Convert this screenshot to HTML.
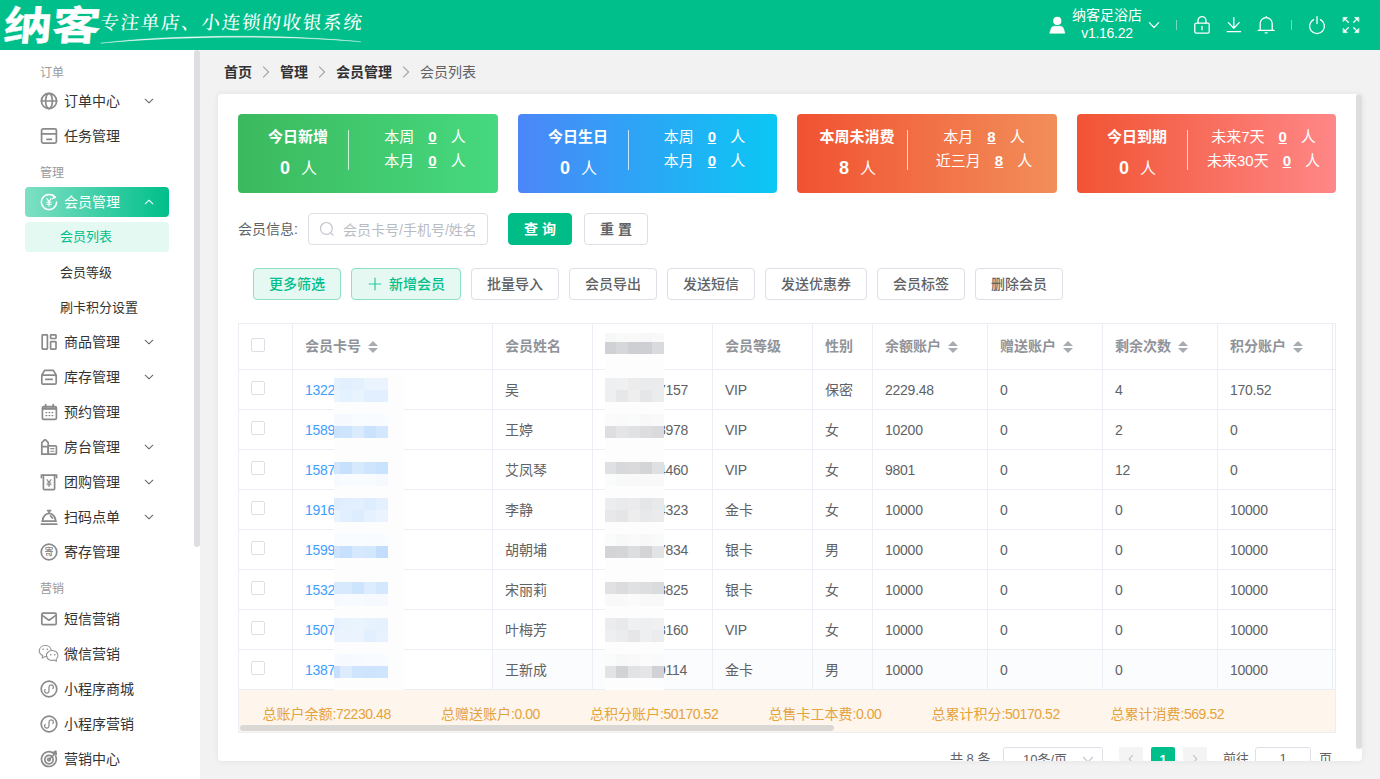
<!DOCTYPE html>
<html lang="zh-CN">
<head>
<meta charset="utf-8">
<title>会员列表</title>
<style>
*{box-sizing:border-box;margin:0;padding:0}
html,body{width:1380px;height:779px;overflow:hidden}
body{font-family:"Liberation Sans","Noto Sans CJK SC",sans-serif;font-size:14px;color:#333;background:#f2f2f2;position:relative}
svg{display:block}
/* header */
#hd{position:absolute;left:0;top:0;width:1380px;height:50px;background:#00bf8a;color:#fff}
#logo{position:absolute;left:4px;top:-2px;font-size:40px;line-height:56px;font-weight:700;white-space:nowrap;transform:scaleX(1.21) skewX(-4deg);transform-origin:0 50%;-webkit-text-stroke:.4px #fff}
#slogan{position:absolute;left:98.5px;top:11px;font-size:18.5px;line-height:24px;letter-spacing:1.75px;font-weight:500;font-family:"Liberation Serif","Noto Serif CJK SC",serif;white-space:nowrap;transform:skewX(-6deg);transform-origin:0 100%}
#swoosh{position:absolute;left:98px;top:33px;opacity:.92}
.hi{position:absolute}
#uname{position:absolute;left:1062px;top:7px;width:90px;text-align:center;font-size:14px;line-height:17px}
.vd{position:absolute;top:20px;width:1px;height:10px;background:rgba(255,255,255,.45)}
/* sidebar */
#sb{position:absolute;left:0;top:50px;width:200px;height:729px;background:#fff;overflow:hidden}
#sbtrack{display:none}
#sbthumb{position:absolute;left:194px;top:50px;width:5.6px;height:496.6px;background:#dddee1;border-radius:3px}
.lbl{position:absolute;left:40px;font-size:12px;line-height:20px;color:#999;height:20px}
.it{position:absolute;left:25px;width:144px;height:30px;line-height:30px;font-size:14px;color:#333;border-radius:4px}
.it .ic{position:absolute;left:15px;top:6px;width:18px;height:18px}
.it .tx{position:absolute;left:39px;top:0;white-space:nowrap}
.it .ar{position:absolute;left:119px;top:11px}
.it.on{background:linear-gradient(90deg,#7fdfc4,#00bf8a);color:#fff}
.sub{position:absolute;left:25px;width:144px;height:30px;line-height:30px;font-size:13px;color:#333;padding-left:35px;border-radius:4px}
.sub.on{background:#e5f9f3;color:#00bf8a}
/* main */
#bc{position:absolute;left:224px;top:62px;height:20px;line-height:20px;font-size:14px;font-weight:bold;color:#303133;white-space:nowrap}
#bc span{display:inline-block;vertical-align:top}
#bc .sp{width:28px;text-align:center;color:#999;font-weight:normal}
#bc .last{font-weight:normal;color:#606266}
#card{position:absolute;left:218px;top:94px;width:1144px;height:667px;background:#fff;border-radius:4px;box-shadow:0 0 6px rgba(0,0,0,.07);overflow:hidden}
#cthumb{position:absolute;right:0;top:0;width:6px;height:655px;background:#dddee0;border-radius:3px}

/* stats */
#stats{position:absolute;left:20px;top:20px;width:1098px;height:79px}
.st{position:absolute !important;top:0}
.c1{left:0}.c2{left:280px;width:259px !important}.c3{left:559px}.c4{left:839px;width:259px !important}
.st{flex:none;width:260px;height:79px;border-radius:4px;position:relative;color:#fff}
.c1{background:linear-gradient(90deg,#3cb95e,#46d97f)}
.c2{background:linear-gradient(90deg,#4c86f8,#0ac8f3)}
.c3{background:linear-gradient(90deg,#f15231,#f28e59)}
.c4{background:linear-gradient(90deg,#f15433,#ff8787)}
.sl{position:absolute;left:10px;top:0;width:100px;height:79px;text-align:center}
.sl .t{position:absolute;left:-10px;right:-10px;top:12px;line-height:22px;font-size:15px;font-weight:bold;white-space:nowrap}
.sl .n{position:absolute;left:0;right:0;top:42px;line-height:24px;font-size:16px;white-space:nowrap}
.sl .n b{font-size:18px;margin-right:11px;margin-left:1px}
.sd{position:absolute;left:110px;top:16px;width:1px;height:40px;background:rgba(255,255,255,.75)}
.sr{position:absolute;left:114px;right:0;top:11px;text-align:center;font-size:15px;line-height:24px;white-space:nowrap}
.sr u{margin:0 14px;font-weight:bold;text-underline-offset:1px}
/* search */
#srch{position:absolute;left:20px;top:119px;height:32px;width:700px}
#srch .lab{position:absolute;left:0;top:0;line-height:32px;color:#606266;font-size:14px}
.inp{position:absolute;left:70px;top:0;width:180px;height:32px;border:1px solid #dcdfe6;border-radius:4px;display:flex;align-items:center;color:#b9bcc3;font-size:14px;white-space:nowrap}
.inp svg{margin-left:10px;margin-right:8px;flex:none}
.btn{position:absolute;top:0;height:32px;line-height:30px;border:1px solid #dcdfe6;border-radius:4px;text-align:center;font-size:14px;color:#606266;background:#fff;font-weight:500;white-space:nowrap}
.btn.pri{background:#00bc87;border-color:#00bc87;color:#fff;font-weight:bold}
.btn.grn{background:#e5f8f2;border-color:#8fdfc6;color:#00bf8a}
.btn svg{display:inline-block;vertical-align:-2px;margin-right:7px;margin-left:1px;opacity:.8}
#brow{position:absolute;left:0;top:174px;height:32px;width:1100px}
/* table */
#tb{position:absolute;left:20px;top:229px;width:1098px;height:410px;border-left:1px solid #ebeef5;border-top:1px solid #ebeef5;border-right:1px solid #ebeef5;overflow:hidden;font-size:14px;color:#606266}
.tr{position:relative;display:flex;height:40px;width:1400px;border-bottom:1px solid #ebeef5}
.tr.th{height:46px;color:#909399;font-weight:bold}
.tr.th .c{bottom:4px}
.td .c.z{top:-2px}
.tr.last .td:nth-child(n+3){background:#fbfcfd}
.td{flex:none;height:100%;border-right:1px solid #ebeef5;position:relative}
.td:first-child{width:54px !important}
.td .c{position:absolute;left:12px;top:0;bottom:0;display:flex;align-items:center;white-space:nowrap}
.td .lk{color:#409eff}
.td .ph{left:65px}
.cb{position:absolute;left:12px;top:50%;margin-top:-9px;width:14px;height:14px;border:1px solid #dcdfe6;border-radius:2px;background:#fff}
.cr{display:inline-block;position:relative;width:10px;height:14px;margin-left:7px;top:2px}
.cr i{position:absolute;left:0;width:0;height:0;border:5px solid transparent}
.cr .up{border-bottom-color:#a8abb2;top:-4px}
.cr .dn{border-top-color:#a8abb2;top:8px}
.mz i{position:absolute;display:block}
#sum{position:absolute;left:0;top:366px;width:1098px;height:43px;background:#fef5ec;color:#e6a23c;font-size:14px;border-bottom:1px solid #ebeef5}
#sum span{position:absolute;top:13.6px;line-height:20px;white-space:nowrap}
#sum span em{font-style:normal;letter-spacing:-.45px}
.td .c.n{letter-spacing:-.25px}
#sum .hs{position:absolute;left:1px;top:35px;width:594px;height:6px;border-radius:3px;background:#d9d8d5}
/* pagination */
#pg{position:absolute;left:0;top:653px;height:28px;width:1144px;font-size:13px;color:#606266}
#pg .t{position:absolute;top:0;line-height:24px;white-space:nowrap}
#pg .sel{position:absolute;top:0;height:28px;border:1px solid #dcdfe6;border-radius:3px;display:flex;align-items:center;justify-content:space-between;white-space:nowrap}
#pg .sel span{margin-left:19px;position:relative;top:-2.5px}
#pg .sel svg{margin-right:8px;position:relative;top:-1px}
#pg .pb{position:absolute;top:0;width:24px;height:28px;padding-bottom:4px;border-radius:2px;background:#f4f4f5;display:flex;align-items:center;justify-content:center;font-weight:bold}
#pg .pb.cur{background:#00bf8a;color:#fff}
</style>
</head>
<body>
<div id="hd">
  <div id="logo">纳客</div>
  <div id="slogan">专注单店、小连锁的收银系统</div>
  <svg class="hi" style="left:1049px;top:16px" width="17" height="18" viewBox="0 0 17 18" fill="#fff"><circle cx="8.3" cy="4.9" r="4.1"/><path d="M0.7 17.2 L2.3 12.2 Q3 10.3 5.2 10.3 H11.4 Q13.6 10.3 14.3 12.2 L15.9 17.2 Z" stroke="#fff" stroke-width=".6" stroke-linejoin="round"/></svg>
<div id="uname">纳客足浴店<br><span style="position:relative;top:1px;letter-spacing:-.3px">v1.16.22</span></div>
<svg class="hi" style="left:1148px;top:21px" width="12" height="8" viewBox="0 0 12 8" fill="none" stroke="#fff" stroke-width="1.2" stroke-linecap="round" stroke-linejoin="round"><path d="M1.3 1.7 L6 6.5 L10.7 1.7"/></svg>
<div class="vd" style="left:1176px"></div>
<svg class="hi" style="left:1193px;top:15px" width="18" height="20" viewBox="0 0 18 20" fill="none" stroke="#fff" stroke-width="1.3" stroke-linecap="round" stroke-linejoin="round"><rect x="1.8" y="8.2" width="14.4" height="10" rx="1.4"/><path d="M5 8V5.6A4 4 0 0 1 13 5.6V8M9 11.4V14.8"/></svg>
<svg class="hi" style="left:1225px;top:15px" width="18" height="20" viewBox="0 0 18 20" fill="none" stroke="#fff" stroke-width="1.3" stroke-linecap="round" stroke-linejoin="round"><path d="M8.8 2.6V13.2M3.4 7.6 L8.8 13.2 L14.2 7.6M2.2 16.7H15.6"/></svg>
<svg class="hi" style="left:1256px;top:15px" width="20" height="20" viewBox="0 0 20 20" fill="none" stroke="#fff" stroke-width="1.3" stroke-linecap="round" stroke-linejoin="round"><path d="M2.2 15.3H18.2M4.2 15.2V8.6A6 6 0 0 1 16.2 8.6V15.2M10.2 2.4V1.6M9.2 17.8H11.2"/></svg>
<div class="vd" style="left:1291px"></div>
<svg class="hi" style="left:1307px;top:15px" width="20" height="20" viewBox="0 0 20 20" fill="none" stroke="#fff" stroke-width="1.3" stroke-linecap="round" stroke-linejoin="round"><path d="M6.6 4.6A7.4 7.4 0 1 0 13.4 4.6M10 1.6V8.6"/></svg>
<svg class="hi" style="left:1342px;top:16px" width="18" height="18" viewBox="0 0 18 18" fill="#fff" stroke="#fff" stroke-width="1.3" stroke-linecap="round" stroke-linejoin="round"><path d="M2.4 2.4 L6.3 6.3M15.6 2.4 L11.7 6.3M2.4 15.6 L6.3 11.7M15.6 15.6 L11.7 11.7"/><path stroke-width=".6" d="M1.4 1.4H5.4L1.4 5.4ZM16.6 1.4H12.6L16.6 5.4ZM1.4 16.6H5.4L1.4 12.6ZM16.6 16.6H12.6L16.6 12.6Z"/></svg>

<svg id="swoosh" width="266" height="14" viewBox="0 0 264 14" preserveAspectRatio="none"><path d="M2.5 10.2 C70 1.6 180 0.6 261 8.8 C180 1.8 75 3.2 2.5 10.2Z" fill="#fff" stroke="#fff" stroke-width=".35" stroke-linejoin="round"/></svg>
</div>
<div id="sb">
<div class="lbl" style="top:13px">订单</div>
<div class="it" style="top:36px"><svg class="ic" width="18" height="18" viewBox="0 0 18 18" fill="none" stroke="#8a8a8a" stroke-width="1.7" stroke-linecap="round" stroke-linejoin="round"><circle cx="9" cy="9" r="7.6"/><ellipse cx="9" cy="9" rx="3.4" ry="7.6"/><path d="M1.4 9H16.6"/></svg><span class="tx">订单中心</span><svg class="ar" width="10" height="8" viewBox="0 0 10 8" fill="none" stroke="#666" stroke-width="1.05" stroke-linecap="round" stroke-linejoin="round"><path d="M1.2 2.2 L5 5.8 L8.8 2.2"/></svg></div>
<div class="it" style="top:71px"><svg class="ic" width="18" height="18" viewBox="0 0 18 18" fill="none" stroke="#8a8a8a" stroke-width="1.7" stroke-linecap="round" stroke-linejoin="round"><rect x="1.6" y="1.8" width="14.8" height="14.4" rx="1.6"/><path d="M1.6 6.9H16.4M7 12.4H11.4"/></svg><span class="tx">任务管理</span></div>
<div class="lbl" style="top:113px">管理</div>
<div class="it on" style="top:137px"><svg class="ic" width="18" height="18" viewBox="0 0 18 18" fill="none" stroke="#fff" stroke-width="1.5" stroke-linecap="round" stroke-linejoin="round"><path d="M14.9 4.2A7.6 7.6 0 1 0 16.6 9"/><path d="M12.6 1.9 L15.3 4.3 L12.3 5.6" /><path d="M6.9 5.6 L9 8.6 L11.1 5.6M9 8.6V13M6.8 9.2H11.2M6.8 11.2H11.2" stroke-width="1.1"/></svg><span class="tx">会员管理</span><svg class="ar" width="10" height="8" viewBox="0 0 10 8" fill="none" stroke="#fff" stroke-width="1.05" stroke-linecap="round" stroke-linejoin="round"><path d="M1.2 5.8 L5 2.2 L8.8 5.8"/></svg></div>
<div class="sub on" style="top:172px">会员列表</div>
<div class="sub" style="top:208px">会员等级</div>
<div class="sub" style="top:243px">刷卡积分设置</div>
<div class="it" style="top:277px"><svg class="ic" width="18" height="18" viewBox="0 0 18 18" fill="none" stroke="#8a8a8a" stroke-width="1.7" stroke-linecap="round" stroke-linejoin="round"><rect x="2.2" y="1.9" width="5.2" height="14.2" rx=".6"/><rect x="10.6" y="1.9" width="5.4" height="3.6" rx=".6"/><rect x="10.6" y="8.6" width="5.4" height="7.5" rx=".6"/></svg><span class="tx">商品管理</span><svg class="ar" width="10" height="8" viewBox="0 0 10 8" fill="none" stroke="#666" stroke-width="1.05" stroke-linecap="round" stroke-linejoin="round"><path d="M1.2 2.2 L5 5.8 L8.8 2.2"/></svg></div>
<div class="it" style="top:312px"><svg class="ic" width="18" height="18" viewBox="0 0 18 18" fill="none" stroke="#8a8a8a" stroke-width="1.7" stroke-linecap="round" stroke-linejoin="round"><path d="M1.8 7.2 L4.6 2.4 H13.4 L16.2 7.2"/><rect x="1.8" y="7.2" width="14.4" height="9" rx="1.4"/><path d="M5.8 11.4H12.2"/></svg><span class="tx">库存管理</span><svg class="ar" width="10" height="8" viewBox="0 0 10 8" fill="none" stroke="#666" stroke-width="1.05" stroke-linecap="round" stroke-linejoin="round"><path d="M1.2 2.2 L5 5.8 L8.8 2.2"/></svg></div>
<div class="it" style="top:347px"><svg class="ic" width="18" height="18" viewBox="0 0 18 18" fill="none" stroke="#8a8a8a" stroke-width="1.7" stroke-linecap="round" stroke-linejoin="round"><rect x="2.4" y="3.6" width="14" height="12.8" rx="1.4"/><path d="M2.4 5.6H16.4" stroke-width="2.4" stroke-linecap="butt"/><path d="M5.6 1.6V4M13.2 1.6V4"/><path d="M6 9.6h.8M9 9.6h.8M12 9.6h.8M6 12.6h.8M9 12.6h.8M12 12.6h.8" stroke-width="1.4"/></svg><span class="tx">预约管理</span></div>
<div class="it" style="top:382px"><svg class="ic" width="18" height="18" viewBox="0 0 18 18" fill="none" stroke="#8a8a8a" stroke-width="1.7" stroke-linecap="round" stroke-linejoin="round"><path d="M1.8 16.2V4.6 L4.6 1.8 H5.6 L8.2 4.6 V16.2Z"/><path d="M1.8 8.6H8.2"/><rect x="8.2" y="7.8" width="8.2" height="8.4" rx="1"/><path d="M10.6 10.6H14M10.6 13.2H14" stroke-width="1.1"/></svg><span class="tx">房台管理</span><svg class="ar" width="10" height="8" viewBox="0 0 10 8" fill="none" stroke="#666" stroke-width="1.05" stroke-linecap="round" stroke-linejoin="round"><path d="M1.2 2.2 L5 5.8 L8.8 2.2"/></svg></div>
<div class="it" style="top:417px"><svg class="ic" width="18" height="18" viewBox="0 0 18 18" fill="none" stroke="#8a8a8a" stroke-width="1.7" stroke-linecap="round" stroke-linejoin="round"><path d="M1.4 4.6V2.2H16.6V4.6"/><path d="M3.4 2.2V15.4Q3.4 16.6 4.6 16.6H13.4Q14.6 16.6 14.6 15.4V2.2"/><path d="M7 6.6 L9 9.4 L11 6.6M9 9.4V13.4M7 10H11M7 11.8H11" stroke-width="1.1"/></svg><span class="tx">团购管理</span><svg class="ar" width="10" height="8" viewBox="0 0 10 8" fill="none" stroke="#666" stroke-width="1.05" stroke-linecap="round" stroke-linejoin="round"><path d="M1.2 2.2 L5 5.8 L8.8 2.2"/></svg></div>
<div class="it" style="top:452px"><svg class="ic" width="18" height="18" viewBox="0 0 18 18" fill="none" stroke="#8a8a8a" stroke-width="1.7" stroke-linecap="round" stroke-linejoin="round"><path d="M1.4 16.2H16.8M2.2 13.2H16"/><path d="M2.6 13 A6.5 7.6 0 0 1 15.6 13"/><path d="M9.1 5.2V3M7.6 2.6H10.6M10.6 7.8 L12.6 10.2"/></svg><span class="tx">扫码点单</span><svg class="ar" width="10" height="8" viewBox="0 0 10 8" fill="none" stroke="#666" stroke-width="1.05" stroke-linecap="round" stroke-linejoin="round"><path d="M1.2 2.2 L5 5.8 L8.8 2.2"/></svg></div>
<div class="it" style="top:487px"><svg class="ic" width="18" height="18" viewBox="0 0 18 18" fill="none" stroke="#8a8a8a" stroke-width="1.7" stroke-linecap="round" stroke-linejoin="round"><circle cx="9" cy="9" r="7.8"/><text x="9" y="12.2" font-size="8.6" text-anchor="middle" fill="#8a8a8a" stroke="none" font-family="Liberation Sans,Noto Sans CJK SC,sans-serif" font-weight="bold">寄</text></svg><span class="tx">寄存管理</span></div>
<div class="lbl" style="top:529px">营销</div>
<div class="it" style="top:554px"><svg class="ic" width="18" height="18" viewBox="0 0 18 18" fill="none" stroke="#8a8a8a" stroke-width="1.7" stroke-linecap="round" stroke-linejoin="round"><rect x="1.8" y="3.2" width="14.4" height="11.4" rx="1.2"/><path d="M2.2 5.4 L9 10.2 L15.8 5.4"/></svg><span class="tx">短信营销</span></div>
<div class="it" style="top:589px"><svg class="ic" style="left:13px;top:5px;width:22px;height:18px" width="22" height="18" viewBox="0 0 22 18" fill="none" stroke="#949494" stroke-width="1.05" stroke-linecap="round" stroke-linejoin="round"><path d="M9 12.4 Q8 12.6 7.2 12.5 L4.2 14.1 L4.7 11.5 A5.6 5.6 0 0 1 1.2 6.6 A6.1 5.6 0 0 1 13.3 6.2"/><path d="M14.6 6.6 A5.5 4.9 0 0 1 18.1 15.1 L18.6 17.3 L16 16 A5.5 4.9 0 1 1 14.6 6.6Z"/><path d="M5 5.2h.3M9.2 5.2h.3M12.6 10.7h.3M16.6 10.7h.3" stroke-width="1.5"/></svg><span class="tx">微信营销</span></div>
<div class="it" style="top:624px"><svg class="ic" width="18" height="18" viewBox="0 0 18 18" fill="none" stroke="#8a8a8a" stroke-width="1.7" stroke-linecap="round" stroke-linejoin="round"><circle cx="9" cy="9" r="7.8"/><path d="M12.8 8.6 A2.2 2.2 0 1 0 9 7 V11 A2.2 2.2 0 1 1 5.2 9.4" stroke-width="1.25"/></svg><span class="tx">小程序商城</span></div>
<div class="it" style="top:659px"><svg class="ic" width="18" height="18" viewBox="0 0 18 18" fill="none" stroke="#8a8a8a" stroke-width="1.7" stroke-linecap="round" stroke-linejoin="round"><circle cx="9" cy="9" r="7.8"/><path d="M12.8 8.6 A2.2 2.2 0 1 0 9 7 V11 A2.2 2.2 0 1 1 5.2 9.4" stroke-width="1.25"/></svg><span class="tx">小程序营销</span></div>
<div class="it" style="top:694px"><svg class="ic" width="18" height="18" viewBox="0 0 18 18" fill="none" stroke="#8a8a8a" stroke-width="1.7" stroke-linecap="round" stroke-linejoin="round"><path d="M13.6 3.4 A7.4 7.4 0 1 0 15.6 6"/><circle cx="9" cy="9.6" r="4.2"/><circle cx="9" cy="9.6" r="1.3"/><path d="M9.6 9 L15.4 3.2M13.4 2.6 L15.8 1.2 L16.2 4.4" /></svg><span class="tx">营销中心</span></div>
</div>
<div id="sbtrack"></div><div id="sbthumb"></div>
<div id="bc"><span>首页</span><span class="sp"><svg width="28" height="20" viewBox="0 0 28 20" fill="none" stroke="#a3a6ad" stroke-width="1.1" stroke-linecap="round" stroke-linejoin="round"><path d="M11.4 4.8 L16.6 10 L11.4 15.2"/></svg></span><span>管理</span><span class="sp"><svg width="28" height="20" viewBox="0 0 28 20" fill="none" stroke="#a3a6ad" stroke-width="1.1" stroke-linecap="round" stroke-linejoin="round"><path d="M11.4 4.8 L16.6 10 L11.4 15.2"/></svg></span><span>会员管理</span><span class="sp"><svg width="28" height="20" viewBox="0 0 28 20" fill="none" stroke="#a3a6ad" stroke-width="1.1" stroke-linecap="round" stroke-linejoin="round"><path d="M11.4 4.8 L16.6 10 L11.4 15.2"/></svg></span><span class="last">会员列表</span></div>
<div id="card">
  <div id="cthumb"></div>
<div id="stats">
<div class="st c1"><div class="sl"><div class="t">今日新增</div><div class="n"><b>0</b>人</div></div><div class="sd"></div><div class="sr"><div class="rl">本周<u>0</u>人</div><div class="rl">本月<u>0</u>人</div></div></div>
<div class="st c2"><div class="sl"><div class="t">今日生日</div><div class="n"><b>0</b>人</div></div><div class="sd"></div><div class="sr"><div class="rl">本周<u>0</u>人</div><div class="rl">本月<u>0</u>人</div></div></div>
<div class="st c3"><div class="sl"><div class="t">本周未消费</div><div class="n"><b>8</b>人</div></div><div class="sd"></div><div class="sr"><div class="rl">本月<u>8</u>人</div><div class="rl">近三月<u>8</u>人</div></div></div>
<div class="st c4"><div class="sl"><div class="t">今日到期</div><div class="n"><b>0</b>人</div></div><div class="sd"></div><div class="sr"><div class="rl">未来7天<u>0</u>人</div><div class="rl">未来30天<u>0</u>人</div></div></div>
</div>
<div id="srch"><span class="lab">会员信息:</span><div class="inp"><svg width="16" height="16" viewBox="0 0 16 16" fill="none" stroke="#c0c4cc" stroke-width="1.2" stroke-linecap="round"><circle cx="7.4" cy="7.4" r="5.9"/><path d="M11.8 11.8 L14.2 14.2"/></svg><span>会员卡号/手机号/姓名</span></div><div class="btn pri" style="left:270px;width:64px">查 询</div><div class="btn" style="left:346px;width:64px;font-weight:bold">重 置</div></div>
<div id="brow">
<div class="btn grn" style="left:35px;width:88px">更多筛选</div>
<div class="btn grn" style="left:133px;width:110px"><svg width="14" height="14" viewBox="0 0 14 14" stroke="#00bf8a" stroke-width="1.2" stroke-linecap="round"><path d="M7 1.2V12.8M1.2 7H12.8"/></svg>新增会员</div>
<div class="btn" style="left:253px;width:88px">批量导入</div>
<div class="btn" style="left:351px;width:88px">会员导出</div>
<div class="btn" style="left:449px;width:88px">发送短信</div>
<div class="btn" style="left:547px;width:102px">发送优惠券</div>
<div class="btn" style="left:659px;width:88px">会员标签</div>
<div class="btn" style="left:757px;width:88px">删除会员</div>
</div>
<div id="tb">
<div class="tr th">
<div class="td" style="width:55px"><span class="cb"></span></div>
<div class="td" style="width:200px"><span class="c">会员卡号<i class="cr"><i class="up"></i><i class="dn"></i></i></span></div>
<div class="td" style="width:100px"><span class="c">会员姓名</span></div>
<div class="td" style="width:120px"></div>
<div class="td" style="width:100px"><span class="c">会员等级</span></div>
<div class="td" style="width:60px"><span class="c">性别</span></div>
<div class="td" style="width:115px"><span class="c">余额账户<i class="cr"><i class="up"></i><i class="dn"></i></i></span></div>
<div class="td" style="width:115px"><span class="c">赠送账户<i class="cr"><i class="up"></i><i class="dn"></i></i></span></div>
<div class="td" style="width:115px"><span class="c">剩余次数<i class="cr"><i class="up"></i><i class="dn"></i></i></span></div>
<div class="td" style="width:115px"><span class="c">积分账户<i class="cr"><i class="up"></i><i class="dn"></i></i></span></div>
<div class="td" style="width:100px"></div>
</div>
<div class="tr">
<div class="td" style="width:55px"><span class="cb"></span></div>
<div class="td" style="width:200px"><span class="c lk n">1322</span></div>
<div class="td" style="width:100px"><span class="c z">吴</span></div>
<div class="td" style="width:120px"><span class="c ph n">7157</span></div>
<div class="td" style="width:100px"><span class="c n">VIP</span></div>
<div class="td" style="width:60px"><span class="c z">保密</span></div>
<div class="td" style="width:115px"><span class="c n">2229.48</span></div>
<div class="td" style="width:115px"><span class="c n">0</span></div>
<div class="td" style="width:115px"><span class="c n">4</span></div>
<div class="td" style="width:115px"><span class="c n">170.52</span></div>
<div class="td" style="width:100px"></div>
</div>
<div class="tr">
<div class="td" style="width:55px"><span class="cb"></span></div>
<div class="td" style="width:200px"><span class="c lk n">1589</span></div>
<div class="td" style="width:100px"><span class="c z">王婷</span></div>
<div class="td" style="width:120px"><span class="c ph n">8978</span></div>
<div class="td" style="width:100px"><span class="c n">VIP</span></div>
<div class="td" style="width:60px"><span class="c z">女</span></div>
<div class="td" style="width:115px"><span class="c n">10200</span></div>
<div class="td" style="width:115px"><span class="c n">0</span></div>
<div class="td" style="width:115px"><span class="c n">2</span></div>
<div class="td" style="width:115px"><span class="c n">0</span></div>
<div class="td" style="width:100px"></div>
</div>
<div class="tr">
<div class="td" style="width:55px"><span class="cb"></span></div>
<div class="td" style="width:200px"><span class="c lk n">1587</span></div>
<div class="td" style="width:100px"><span class="c z">艾凤琴</span></div>
<div class="td" style="width:120px"><span class="c ph n">4460</span></div>
<div class="td" style="width:100px"><span class="c n">VIP</span></div>
<div class="td" style="width:60px"><span class="c z">女</span></div>
<div class="td" style="width:115px"><span class="c n">9801</span></div>
<div class="td" style="width:115px"><span class="c n">0</span></div>
<div class="td" style="width:115px"><span class="c n">12</span></div>
<div class="td" style="width:115px"><span class="c n">0</span></div>
<div class="td" style="width:100px"></div>
</div>
<div class="tr">
<div class="td" style="width:55px"><span class="cb"></span></div>
<div class="td" style="width:200px"><span class="c lk n">1916</span></div>
<div class="td" style="width:100px"><span class="c z">李静</span></div>
<div class="td" style="width:120px"><span class="c ph n">4323</span></div>
<div class="td" style="width:100px"><span class="c z">金卡</span></div>
<div class="td" style="width:60px"><span class="c z">女</span></div>
<div class="td" style="width:115px"><span class="c n">10000</span></div>
<div class="td" style="width:115px"><span class="c n">0</span></div>
<div class="td" style="width:115px"><span class="c n">0</span></div>
<div class="td" style="width:115px"><span class="c n">10000</span></div>
<div class="td" style="width:100px"></div>
</div>
<div class="tr">
<div class="td" style="width:55px"><span class="cb"></span></div>
<div class="td" style="width:200px"><span class="c lk n">1599</span></div>
<div class="td" style="width:100px"><span class="c z">胡朝埔</span></div>
<div class="td" style="width:120px"><span class="c ph n">7834</span></div>
<div class="td" style="width:100px"><span class="c z">银卡</span></div>
<div class="td" style="width:60px"><span class="c z">男</span></div>
<div class="td" style="width:115px"><span class="c n">10000</span></div>
<div class="td" style="width:115px"><span class="c n">0</span></div>
<div class="td" style="width:115px"><span class="c n">0</span></div>
<div class="td" style="width:115px"><span class="c n">10000</span></div>
<div class="td" style="width:100px"></div>
</div>
<div class="tr">
<div class="td" style="width:55px"><span class="cb"></span></div>
<div class="td" style="width:200px"><span class="c lk n">1532</span></div>
<div class="td" style="width:100px"><span class="c z">宋丽莉</span></div>
<div class="td" style="width:120px"><span class="c ph n">8825</span></div>
<div class="td" style="width:100px"><span class="c z">银卡</span></div>
<div class="td" style="width:60px"><span class="c z">女</span></div>
<div class="td" style="width:115px"><span class="c n">10000</span></div>
<div class="td" style="width:115px"><span class="c n">0</span></div>
<div class="td" style="width:115px"><span class="c n">0</span></div>
<div class="td" style="width:115px"><span class="c n">10000</span></div>
<div class="td" style="width:100px"></div>
</div>
<div class="tr">
<div class="td" style="width:55px"><span class="cb"></span></div>
<div class="td" style="width:200px"><span class="c lk n">1507</span></div>
<div class="td" style="width:100px"><span class="c z">叶梅芳</span></div>
<div class="td" style="width:120px"><span class="c ph n">3160</span></div>
<div class="td" style="width:100px"><span class="c n">VIP</span></div>
<div class="td" style="width:60px"><span class="c z">女</span></div>
<div class="td" style="width:115px"><span class="c n">10000</span></div>
<div class="td" style="width:115px"><span class="c n">0</span></div>
<div class="td" style="width:115px"><span class="c n">0</span></div>
<div class="td" style="width:115px"><span class="c n">10000</span></div>
<div class="td" style="width:100px"></div>
</div>
<div class="tr last">
<div class="td" style="width:55px"><span class="cb"></span></div>
<div class="td" style="width:200px"><span class="c lk n">1387</span></div>
<div class="td" style="width:100px"><span class="c z">王新成</span></div>
<div class="td" style="width:120px"><span class="c ph n">9114</span></div>
<div class="td" style="width:100px"><span class="c z">金卡</span></div>
<div class="td" style="width:60px"><span class="c z">男</span></div>
<div class="td" style="width:115px"><span class="c n">10000</span></div>
<div class="td" style="width:115px"><span class="c n">0</span></div>
<div class="td" style="width:115px"><span class="c n">0</span></div>
<div class="td" style="width:115px"><span class="c n">10000</span></div>
<div class="td" style="width:100px"></div>
</div>
<div class="mz">
<i style="left:95px;top:51px;width:70px;height:315px;background:#fdfdfe"></i>
<i style="left:366px;top:9px;width:59px;height:357px;background:#fdfdfd"></i>
<i style="left:95px;top:54px;width:6px;height:12px;background:#e6f1fe"></i>
<i style="left:366px;top:54px;width:11px;height:12px;background:#eeeff0"></i>
<i style="left:101px;top:54px;width:12px;height:12px;background:#e1effe"></i>
<i style="left:377px;top:54px;width:12px;height:12px;background:#eff0f1"></i>
<i style="left:113px;top:54px;width:12px;height:12px;background:#e3f0fe"></i>
<i style="left:389px;top:54px;width:12px;height:12px;background:#ececed"></i>
<i style="left:125px;top:54px;width:12px;height:12px;background:#eaf4fe"></i>
<i style="left:401px;top:54px;width:12px;height:12px;background:#eaebec"></i>
<i style="left:137px;top:54px;width:12px;height:12px;background:#ebf4fe"></i>
<i style="left:413px;top:54px;width:12px;height:12px;background:#ebebed"></i>
<i style="left:95px;top:66px;width:6px;height:12px;background:#eaf4fe"></i>
<i style="left:366px;top:66px;width:11px;height:12px;background:#efeff0"></i>
<i style="left:101px;top:66px;width:12px;height:12px;background:#e4f1fe"></i>
<i style="left:377px;top:66px;width:12px;height:12px;background:#e6e7e9"></i>
<i style="left:113px;top:66px;width:12px;height:12px;background:#e9f3fe"></i>
<i style="left:389px;top:66px;width:12px;height:12px;background:#eeeeef"></i>
<i style="left:125px;top:66px;width:12px;height:12px;background:#e1effe"></i>
<i style="left:401px;top:66px;width:12px;height:12px;background:#e5e6e7"></i>
<i style="left:137px;top:66px;width:12px;height:12px;background:#e2effe"></i>
<i style="left:413px;top:66px;width:12px;height:12px;background:#ebeced"></i>
<i style="left:95px;top:90px;width:6px;height:12px;background:#f5faff"></i>
<i style="left:366px;top:90px;width:11px;height:12px;background:#fbfbfb"></i>
<i style="left:101px;top:90px;width:12px;height:12px;background:#f6faff"></i>
<i style="left:377px;top:90px;width:12px;height:12px;background:#fafafa"></i>
<i style="left:113px;top:90px;width:12px;height:12px;background:#f9fcff"></i>
<i style="left:389px;top:90px;width:12px;height:12px;background:#fafbfb"></i>
<i style="left:125px;top:90px;width:12px;height:12px;background:#f8fbff"></i>
<i style="left:401px;top:90px;width:12px;height:12px;background:#f8f8f9"></i>
<i style="left:137px;top:90px;width:12px;height:12px;background:#f9fcff"></i>
<i style="left:413px;top:90px;width:12px;height:12px;background:#f9f9f9"></i>
<i style="left:95px;top:102px;width:6px;height:12px;background:#cce3fd"></i>
<i style="left:366px;top:102px;width:11px;height:12px;background:#dedee1"></i>
<i style="left:101px;top:102px;width:12px;height:12px;background:#cee4fd"></i>
<i style="left:377px;top:102px;width:12px;height:12px;background:#e4e5e6"></i>
<i style="left:113px;top:102px;width:12px;height:12px;background:#dbebfe"></i>
<i style="left:389px;top:102px;width:12px;height:12px;background:#e1e2e4"></i>
<i style="left:125px;top:102px;width:12px;height:12px;background:#cae2fd"></i>
<i style="left:401px;top:102px;width:12px;height:12px;background:#dddde0"></i>
<i style="left:137px;top:102px;width:12px;height:12px;background:#d4e8fd"></i>
<i style="left:413px;top:102px;width:12px;height:12px;background:#dadadd"></i>
<i style="left:95px;top:138px;width:6px;height:12px;background:#d1e6fd"></i>
<i style="left:366px;top:138px;width:11px;height:12px;background:#dfe0e2"></i>
<i style="left:101px;top:138px;width:12px;height:12px;background:#c7e1fd"></i>
<i style="left:377px;top:138px;width:12px;height:12px;background:#d7d8db"></i>
<i style="left:113px;top:138px;width:12px;height:12px;background:#d6e9fd"></i>
<i style="left:389px;top:138px;width:12px;height:12px;background:#dadadd"></i>
<i style="left:125px;top:138px;width:12px;height:12px;background:#cfe5fd"></i>
<i style="left:401px;top:138px;width:12px;height:12px;background:#d4d5d7"></i>
<i style="left:137px;top:138px;width:12px;height:12px;background:#c9e2fd"></i>
<i style="left:413px;top:138px;width:12px;height:12px;background:#e0e0e2"></i>
<i style="left:95px;top:150px;width:6px;height:12px;background:#f5faff"></i>
<i style="left:366px;top:150px;width:11px;height:12px;background:#fafbfb"></i>
<i style="left:101px;top:150px;width:12px;height:12px;background:#f8fbff"></i>
<i style="left:377px;top:150px;width:12px;height:12px;background:#f8f9f9"></i>
<i style="left:113px;top:150px;width:12px;height:12px;background:#f9fcff"></i>
<i style="left:389px;top:150px;width:12px;height:12px;background:#f9f9fa"></i>
<i style="left:125px;top:150px;width:12px;height:12px;background:#f9fcff"></i>
<i style="left:401px;top:150px;width:12px;height:12px;background:#f9f9f9"></i>
<i style="left:137px;top:150px;width:12px;height:12px;background:#f6faff"></i>
<i style="left:413px;top:150px;width:12px;height:12px;background:#f9f9fa"></i>
<i style="left:95px;top:174px;width:6px;height:12px;background:#ddedfe"></i>
<i style="left:366px;top:174px;width:11px;height:12px;background:#ecedee"></i>
<i style="left:101px;top:174px;width:12px;height:12px;background:#e0eefe"></i>
<i style="left:377px;top:174px;width:12px;height:12px;background:#e9eaeb"></i>
<i style="left:113px;top:174px;width:12px;height:12px;background:#e2effe"></i>
<i style="left:389px;top:174px;width:12px;height:12px;background:#ebebed"></i>
<i style="left:125px;top:174px;width:12px;height:12px;background:#deedfe"></i>
<i style="left:401px;top:174px;width:12px;height:12px;background:#e5e6e7"></i>
<i style="left:137px;top:174px;width:12px;height:12px;background:#e4f0fe"></i>
<i style="left:413px;top:174px;width:12px;height:12px;background:#e8e9ea"></i>
<i style="left:95px;top:186px;width:6px;height:12px;background:#eaf4fe"></i>
<i style="left:366px;top:186px;width:11px;height:12px;background:#e8e8ea"></i>
<i style="left:101px;top:186px;width:12px;height:12px;background:#e1effe"></i>
<i style="left:377px;top:186px;width:12px;height:12px;background:#e5e5e7"></i>
<i style="left:113px;top:186px;width:12px;height:12px;background:#deedfe"></i>
<i style="left:389px;top:186px;width:12px;height:12px;background:#ededee"></i>
<i style="left:125px;top:186px;width:12px;height:12px;background:#e5f1fe"></i>
<i style="left:401px;top:186px;width:12px;height:12px;background:#e8e9ea"></i>
<i style="left:137px;top:186px;width:12px;height:12px;background:#ebf4fe"></i>
<i style="left:413px;top:186px;width:12px;height:12px;background:#ebebec"></i>
<i style="left:95px;top:210px;width:6px;height:12px;background:#f9fcff"></i>
<i style="left:366px;top:210px;width:11px;height:12px;background:#fafbfb"></i>
<i style="left:101px;top:210px;width:12px;height:12px;background:#f9fcff"></i>
<i style="left:377px;top:210px;width:12px;height:12px;background:#f8f8f9"></i>
<i style="left:113px;top:210px;width:12px;height:12px;background:#f9fcff"></i>
<i style="left:389px;top:210px;width:12px;height:12px;background:#fafafa"></i>
<i style="left:125px;top:210px;width:12px;height:12px;background:#f8fbff"></i>
<i style="left:401px;top:210px;width:12px;height:12px;background:#f8f8f9"></i>
<i style="left:137px;top:210px;width:12px;height:12px;background:#f9fcff"></i>
<i style="left:413px;top:210px;width:12px;height:12px;background:#f9fafa"></i>
<i style="left:95px;top:222px;width:6px;height:12px;background:#cee4fd"></i>
<i style="left:366px;top:222px;width:11px;height:12px;background:#d4d4d7"></i>
<i style="left:101px;top:222px;width:12px;height:12px;background:#c7e0fd"></i>
<i style="left:377px;top:222px;width:12px;height:12px;background:#d4d5d8"></i>
<i style="left:113px;top:222px;width:12px;height:12px;background:#d5e8fd"></i>
<i style="left:389px;top:222px;width:12px;height:12px;background:#dddee0"></i>
<i style="left:125px;top:222px;width:12px;height:12px;background:#d3e7fd"></i>
<i style="left:401px;top:222px;width:12px;height:12px;background:#d4d4d7"></i>
<i style="left:137px;top:222px;width:12px;height:12px;background:#c3defd"></i>
<i style="left:413px;top:222px;width:12px;height:12px;background:#e2e3e5"></i>
<i style="left:95px;top:258px;width:6px;height:12px;background:#d8eafe"></i>
<i style="left:366px;top:258px;width:11px;height:12px;background:#e1e1e3"></i>
<i style="left:101px;top:258px;width:12px;height:12px;background:#d6e9fd"></i>
<i style="left:377px;top:258px;width:12px;height:12px;background:#dcdcdf"></i>
<i style="left:113px;top:258px;width:12px;height:12px;background:#cde4fd"></i>
<i style="left:389px;top:258px;width:12px;height:12px;background:#e0e1e3"></i>
<i style="left:125px;top:258px;width:12px;height:12px;background:#ddecfe"></i>
<i style="left:401px;top:258px;width:12px;height:12px;background:#dddee0"></i>
<i style="left:137px;top:258px;width:12px;height:12px;background:#d3e7fd"></i>
<i style="left:413px;top:258px;width:12px;height:12px;background:#dadbdd"></i>
<i style="left:95px;top:270px;width:6px;height:12px;background:#f5faff"></i>
<i style="left:366px;top:270px;width:11px;height:12px;background:#f9f9f9"></i>
<i style="left:101px;top:270px;width:12px;height:12px;background:#f7fbff"></i>
<i style="left:377px;top:270px;width:12px;height:12px;background:#f9f9f9"></i>
<i style="left:113px;top:270px;width:12px;height:12px;background:#f7faff"></i>
<i style="left:389px;top:270px;width:12px;height:12px;background:#fbfbfb"></i>
<i style="left:125px;top:270px;width:12px;height:12px;background:#f6faff"></i>
<i style="left:401px;top:270px;width:12px;height:12px;background:#f8f8f9"></i>
<i style="left:137px;top:270px;width:12px;height:12px;background:#f6faff"></i>
<i style="left:413px;top:270px;width:12px;height:12px;background:#f8f8f9"></i>
<i style="left:95px;top:294px;width:6px;height:12px;background:#e5f1fe"></i>
<i style="left:366px;top:294px;width:11px;height:12px;background:#ebeced"></i>
<i style="left:101px;top:294px;width:12px;height:12px;background:#e9f3fe"></i>
<i style="left:377px;top:294px;width:12px;height:12px;background:#e9e9eb"></i>
<i style="left:113px;top:294px;width:12px;height:12px;background:#eaf4fe"></i>
<i style="left:389px;top:294px;width:12px;height:12px;background:#eff0f1"></i>
<i style="left:125px;top:294px;width:12px;height:12px;background:#e8f2fe"></i>
<i style="left:401px;top:294px;width:12px;height:12px;background:#eeeff0"></i>
<i style="left:137px;top:294px;width:12px;height:12px;background:#e6f1fe"></i>
<i style="left:413px;top:294px;width:12px;height:12px;background:#f0f0f1"></i>
<i style="left:95px;top:306px;width:6px;height:12px;background:#ebf4fe"></i>
<i style="left:366px;top:306px;width:11px;height:12px;background:#eeeff0"></i>
<i style="left:101px;top:306px;width:12px;height:12px;background:#eaf3fe"></i>
<i style="left:377px;top:306px;width:12px;height:12px;background:#ececee"></i>
<i style="left:113px;top:306px;width:12px;height:12px;background:#ebf4fe"></i>
<i style="left:389px;top:306px;width:12px;height:12px;background:#e6e6e8"></i>
<i style="left:125px;top:306px;width:12px;height:12px;background:#e1effe"></i>
<i style="left:401px;top:306px;width:12px;height:12px;background:#eeeff0"></i>
<i style="left:137px;top:306px;width:12px;height:12px;background:#e7f2fe"></i>
<i style="left:413px;top:306px;width:12px;height:12px;background:#ececee"></i>
<i style="left:95px;top:330px;width:6px;height:12px;background:#f8fbff"></i>
<i style="left:366px;top:330px;width:11px;height:12px;background:#fafbfb"></i>
<i style="left:101px;top:330px;width:12px;height:12px;background:#f6faff"></i>
<i style="left:377px;top:330px;width:12px;height:12px;background:#f8f8f8"></i>
<i style="left:113px;top:330px;width:12px;height:12px;background:#f7fbff"></i>
<i style="left:389px;top:330px;width:12px;height:12px;background:#f9f9fa"></i>
<i style="left:125px;top:330px;width:12px;height:12px;background:#f9fcff"></i>
<i style="left:401px;top:330px;width:12px;height:12px;background:#fbfbfb"></i>
<i style="left:137px;top:330px;width:12px;height:12px;background:#f8fbff"></i>
<i style="left:413px;top:330px;width:12px;height:12px;background:#fafafa"></i>
<i style="left:95px;top:342px;width:6px;height:12px;background:#c6e0fd"></i>
<i style="left:366px;top:342px;width:11px;height:12px;background:#e2e3e5"></i>
<i style="left:101px;top:342px;width:12px;height:12px;background:#dcecfe"></i>
<i style="left:377px;top:342px;width:12px;height:12px;background:#d2d3d6"></i>
<i style="left:113px;top:342px;width:12px;height:12px;background:#cee5fd"></i>
<i style="left:389px;top:342px;width:12px;height:12px;background:#e2e3e5"></i>
<i style="left:125px;top:342px;width:12px;height:12px;background:#cee4fd"></i>
<i style="left:401px;top:342px;width:12px;height:12px;background:#e5e5e7"></i>
<i style="left:137px;top:342px;width:12px;height:12px;background:#cee5fd"></i>
<i style="left:413px;top:342px;width:12px;height:12px;background:#d2d2d6"></i>
<i style="left:366px;top:9px;width:11px;height:9px;background:#f6f7f7"></i>
<i style="left:366px;top:18px;width:11px;height:12px;background:#d0d1d4"></i>
<i style="left:377px;top:9px;width:12px;height:9px;background:#f9f9f9"></i>
<i style="left:377px;top:18px;width:12px;height:12px;background:#d7d7da"></i>
<i style="left:389px;top:9px;width:12px;height:9px;background:#f9f9fa"></i>
<i style="left:389px;top:18px;width:12px;height:12px;background:#cecfd3"></i>
<i style="left:401px;top:9px;width:12px;height:9px;background:#f8f8f8"></i>
<i style="left:401px;top:18px;width:12px;height:12px;background:#cecfd2"></i>
<i style="left:413px;top:9px;width:12px;height:9px;background:#f9f9f9"></i>
<i style="left:413px;top:18px;width:12px;height:12px;background:#d9dadd"></i>
</div>
<div id="sum"><span style="left:23.5px">总账户余额<em>:72230.48</em></span><span style="left:202px">总赠送账户<em>:0.00</em></span><span style="left:351px">总积分账户<em>:50170.52</em></span><span style="left:529.5px">总售卡工本费<em>:0.00</em></span><span style="left:692.5px">总累计积分<em>:50170.52</em></span><span style="left:871.5px">总累计消费<em>:569.52</em></span><div class="hs"></div></div>
</div>
<div id="pg"><span class="t" style="left:732px">共 8 条</span><div class="sel" style="left:785px;width:100px"><span>10条/页</span><svg width="12" height="8" viewBox="0 0 12 8" fill="none" stroke="#c0c4cc" stroke-width="1.1" stroke-linecap="round" stroke-linejoin="round"><path d="M1.5 1.5 L6 6 L10.5 1.5"/></svg></div><div class="pb" style="left:901px"><svg width="8" height="10" viewBox="0 0 8 10" fill="none" stroke="#c0c4cc" stroke-width="1.1" stroke-linecap="round" stroke-linejoin="round"><path d="M5.6 1.4 L2.2 5 L5.6 8.6"/></svg></div><div class="pb cur" style="left:933px">1</div><div class="pb" style="left:965px"><svg width="8" height="10" viewBox="0 0 8 10" fill="none" stroke="#c0c4cc" stroke-width="1.1" stroke-linecap="round" stroke-linejoin="round"><path d="M2.4 1.4 L5.8 5 L2.4 8.6"/></svg></div><span class="t" style="left:1005px">前往</span><div class="sel" style="left:1037px;width:56px;justify-content:center"><span style="margin:0">1</span></div><span class="t" style="left:1101px">页</span></div>
</div>
</body>
</html>
